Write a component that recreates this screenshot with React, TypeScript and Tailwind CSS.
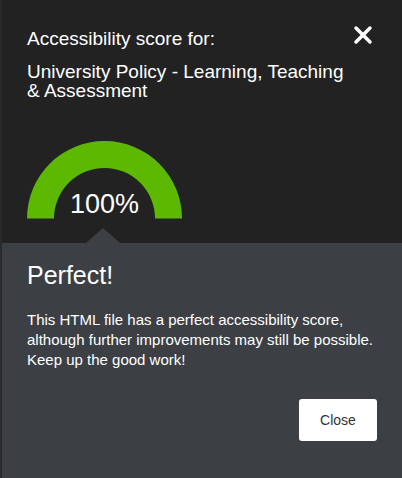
import { X } from 'lucide-react'

// score gauge drawn as a half ring
const Gauge = ({ score }: { score: number }) => {
  return (
    <div className="relative w-[155px] h-[78px]">
      <svg width="155" height="78" viewBox="0 0 155 78">
        <path
          d="M0 77.5 A77.5 77.5 0 0 1 155 77.5 L128 77.5 A50.5 50.5 0 0 0 27 77.5 Z"
          fill="#5cb800"
        />
      </svg>
      <div className="absolute left-0 right-0 bottom-[1px] text-center text-[27px] leading-none text-white">
        {score}%
      </div>
    </div>
  )
}

export default function App() {
  return (
    <div className="w-[402px] h-[478px] flex flex-col bg-[#222222] font-['Liberation_Sans',Arial,sans-serif] border-l-2 border-[#2a2a2a]">
      <div className="relative bg-[#222222] h-[243px] pl-[25px] pt-[28px]">
        <button className="absolute top-[21px] right-[25px] text-white">
          <X size={28} strokeWidth={3} />
        </button>
        <h2 className="text-[19px] leading-[21px] text-white">Accessibility score for:</h2>
        <p className="mt-[13px] text-[19px] leading-[19px] text-white">
          University Policy - Learning, Teaching
          <br />
          &amp; Assessment
        </p>
        <div className="mt-[41px]">
          <Gauge score={100} />
        </div>
        <div className="absolute left-[84px] bottom-0 w-0 h-0 border-l-[17px] border-r-[17px] border-b-[15px] border-l-transparent border-r-transparent border-b-[#3c4044]" />
      </div>
      <div className="flex-1 bg-[#3c4044] pl-[25px] pr-[23px] pt-[17px]">
        <h3 className="text-[25px] leading-[30px] text-white">Perfect!</h3>
        <p className="mt-[20px] text-[15px] leading-[20px] text-white">
          This HTML file has a perfect accessibility score, although further improvements may still be possible. Keep up the good work!
        </p>
        <div className="flex justify-end pr-[2px] mt-[29px]">
          <button className="w-[78px] h-[42px] bg-white rounded-[3px] text-[14px] text-[#333333]">
            Close
          </button>
        </div>
      </div>
    </div>
  )
}
